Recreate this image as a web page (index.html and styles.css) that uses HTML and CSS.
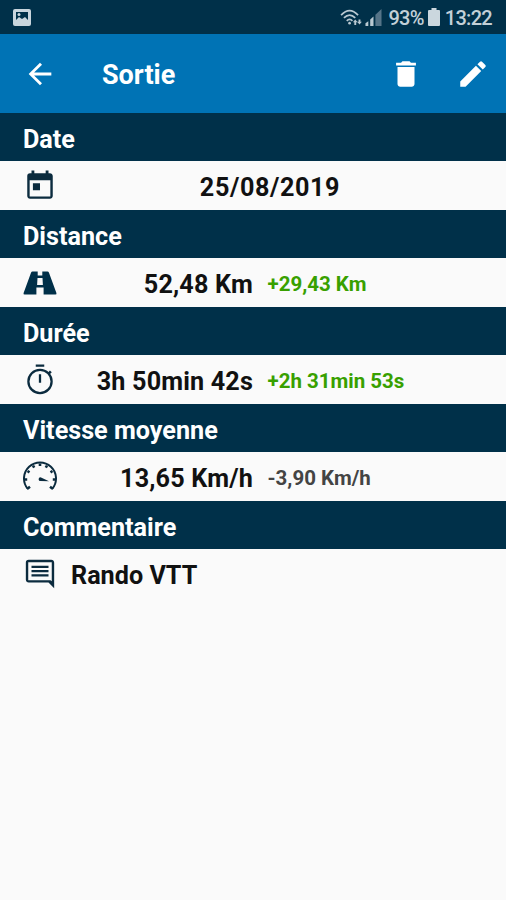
FILE: index.html
```html
<!DOCTYPE html>
<html lang="fr">
<head>
  <meta charset="utf-8">
  <title>Sortie</title>
  <link rel="stylesheet" href="styles.css">
</head>
<body>
  <div class="status-bar">
    <svg class="status-picture" viewBox="0 0 18 17">
      <rect x="0" y="0" width="18" height="17" rx="2" fill="#c8d5dd"/>
      <path d="M3 3h12v8l-3-3-3 2-3-2-3 3z" fill="#003049"/>
      <circle cx="6" cy="5.5" r="1.5" fill="#c8d5dd"/>
    </svg>
    <div class="status-right">
      <svg class="status-wifi" viewBox="0 0 23 18">
        <g fill="none" stroke="#b9c9d2" stroke-width="1.8">
          <path d="M1 6.500Q10 -3 19 6.500"/>
          <path d="M4 9.500Q10 3.500 16 9.500"/>
          <path d="M7 12.500Q10 9.500 13 12.500"/>
        </g>
        <circle cx="10" cy="15" r="1.400" fill="#b9c9d2"/>
        <path d="M16 11l2.500 3H17v3h-2v-3h-1.500zM20.500 16.500l-2.500-3h1.500V11h2v2.500H23z" fill="#b9c9d2"/>
      </svg>
      <svg class="status-signal" viewBox="0 0 17 18">
        <path d="M0 18v-3l3-2v5zM5 18v-7l3.500-3v10z" fill="#b9c9d2"/>
        <path d="M10.500 18V6L17 0v18z" fill="#557488"/>
      </svg>
      <span class="status-percent">93%</span>
      <svg class="status-battery" viewBox="0 0 12 18">
        <path d="M3.500 0h5v2H11q1 0 1 1v14q0 1-1 1H1q-1 0-1-1V3q0-1 1-1h2.500z" fill="#cbd7de"/>
      </svg>
      <span class="status-time">13:22</span>
    </div>
  </div>

  <div class="toolbar">
    <svg class="icon-back" viewBox="0 0 24 24"><path d="M20 11H7.830l5.590-5.590L12 4l-8 8 8 8 1.410-1.410L7.830 13H20v-2z"/></svg>
    <h1>Sortie</h1>
    <svg class="icon-delete" viewBox="0 0 24 24"><path d="M6 19c0 1.100.9 2 2 2h8c1.100 0 2-.9 2-2V7H6v12zM19 4h-3.500l-1-1h-5l-1 1H5v2h14V4z"/></svg>
    <svg class="icon-edit" viewBox="0 0 24 24"><path d="M3 17.250V21h3.750L17.810 9.940l-3.750-3.750L3 17.250zM20.710 7.040a1 1 0 0 0 0-1.410l-2.340-2.340a1 1 0 0 0-1.410 0l-1.830 1.830 3.750 3.750 1.830-1.830z"/></svg>
  </div>

  <h2>Date</h2>
  <div class="row">
    <svg class="icon" viewBox="0 0 24 24"><path d="M19 3h-1V1h-2v2H8V1H6v2H5a2 2 0 0 0-2 2v14c0 1.100.9 2 2 2h14c1.100 0 2-.9 2-2V5c0-1.100-.9-2-2-2zm0 16.400H4.700V8H19.300v11.400zM7 10h5v5H7z"/></svg>
    <span class="date">25/08/2019</span>
  </div>

  <h2>Distance</h2>
  <div class="row">
    <svg class="icon icon-road" viewBox="0 0 34 34">
      <path d="M9.500 5.500h5.200v4h4.600v-4h5.200q1 0 1.400 1L33.400 27q.5 1.500-1 1.500H20.600v-7h-7.200v7H1.600q-1.500 0-1-1.500L8.100 6.500q.4-1 1.400-1zM14.500 12l-.4 7h5.800l-.4-7z" fill-rule="evenodd"/>
    </svg>
    <span class="value">52,48 Km</span>
    <span class="delta better">+29,43 Km</span>
  </div>

  <h2>Durée</h2>
  <div class="row">
    <svg class="icon" viewBox="0 0 24 24">
      <path d="M9 1h6v1.600H9zM11.200 8h1.600v6h-1.600z"/>
      <circle cx="12" cy="13" r="8.200" fill="none" stroke="#0b2b3e" stroke-width="1.600"/>
      <path d="M17.300 7l1.700-1.700 1.300 1.300-1.700 1.700z"/>
    </svg>
    <span class="value">3h 50min 42s</span>
    <span class="delta better">+2h 31min 53s</span>
  </div>

  <h2>Vitesse moyenne</h2>
  <div class="row">
    <svg class="icon" viewBox="0 0 34 34">
      <g fill="none" stroke="#0b2b3e">
        <path d="M4.500 28.500A16 16 0 1 1 29.500 28.500" stroke-width="2"/>
        <path d="M4 29l3-2.200M1.500 19.500h2.700M4.500 11l2 1.300M10 5.500l1.200 2.200M17 3.500v2.500M24 5.500l-1.200 2.200M29.500 11l-2 1.300M32.500 19.500h-2.700M30 29l-3-2.200" stroke-width="2.600"/>
      </g>
      <path d="M17.500 17.300L26 21.200l-8.500-.1a1.900 1.900 0 1 1 0-3.800z"/>
    </svg>
    <span class="value">13,65 Km/h</span>
    <span class="delta worse">-3,90 Km/h</span>
  </div>

  <h2>Commentaire</h2>
  <div class="row">
    <svg class="icon" viewBox="0 0 24 24"><path d="M22 4c0-1.100-.9-2-2-2H4a2 2 0 0 0-2 2v12c0 1.100.9 2 2 2h14l4 4V4zm-1.700 13.200L19.400 16.400H3.700V3.700h16.600zM6 12.200h12v1.500H6zM6 9.200h12v1.500H6zM6 6.200h12v1.500H6z" fill-rule="evenodd"/></svg>
    <span class="comment">Rando VTT</span>
  </div>
</body>
</html>
```

FILE: styles.css
```css
body {
  margin: 0;
  background-color: #fafafa;
  font-family: Roboto, sans-serif;
  color: #111;
}
svg {
  display: block;
  flex: none;
}
.status-bar {
  display: flex;
  align-items: center;
  justify-content: space-between;
  height: 34px;
  padding: 0 14px 0 13px;
  background-color: #003049;
  color: #c3d0d8;
  font-size: 20px;
}
.status-picture {
  width: 18px;
  height: 17px;
}
.status-right {
  display: flex;
  align-items: center;
}
.status-wifi {
  width: 22px;
  height: 17px;
}
.status-signal {
  width: 17px;
  height: 17px;
  margin: 0 6px 0 3px;
}
.status-percent, .status-time {
  padding-top: 2px;
  letter-spacing: -0.7px;
  font-weight: 500;
}
.status-battery {
  width: 12px;
  height: 18px;
  margin: 0 5px 0 4px;
}
.toolbar {
  display: flex;
  align-items: center;
  height: 79px;
  padding: 0 16px 0 23px;
  background-color: #0073b5;
}
.toolbar svg {
  width: 34px;
  height: 34px;
  fill: #fff;
}
.toolbar h1 {
  flex: 1;
  margin: 3px 0 0 45px;
  color: #fff;
  font-size: 27px;
  font-weight: 700;
}
.toolbar .icon-delete {
  margin-right: 33px;
}
h2 {
  height: 48px;
  margin: 0;
  padding-left: 23px;
  background-color: #003049;
  color: #fff;
  font-size: 25.2px;
  font-weight: 700;
  line-height: 53px;
}
.row {
  display: flex;
  align-items: center;
  height: 49px;
  padding: 0 23px;
}
.icon {
  width: 34px;
  height: 34px;
  fill: #0b2b3e;
}
.icon-road {
  fill: #003049;
}
.date, .value, .comment {
  padding-top: 4px;
  font-size: 25.2px;
  font-weight: 700;
}
.date {
  flex: 1;
  letter-spacing: 0.6px;
  text-align: center;
}
.value {
  width: 196px;
  letter-spacing: 0.15px;
  text-align: right;
}
.comment {
  margin-left: 14px;
}
.delta {
  margin-left: 14.5px;
  padding-top: 3px;
  font-size: 20.5px;
  font-weight: 700;
}
.better {
  color: #38a000;
}
.worse {
  color: #444;
}
```
